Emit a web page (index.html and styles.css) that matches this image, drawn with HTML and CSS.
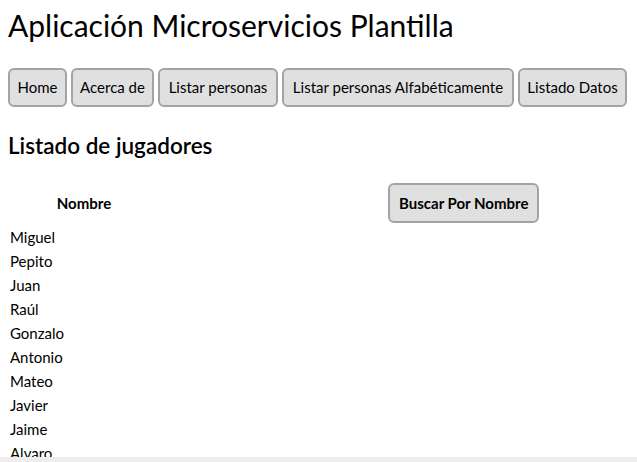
FILE: index.html
```html
<!DOCTYPE html>
<html lang="es">
<head>
<meta charset="utf-8">
<title>Aplicación Microservicios Plantilla</title>
<link rel="stylesheet" href="styles.css">
</head>
<body>
<h1 class="title">Aplicación Microservicios Plantilla</h1>
<nav class="nav">
  <a class="nav-btn" href="#">Home</a>
  <a class="nav-btn" href="#">Acerca de</a>
  <a class="nav-btn" href="#">Listar personas</a>
  <a class="nav-btn" href="#">Listar personas Alfabéticamente</a>
  <a class="nav-btn" href="#">Listado Datos</a>
</nav>
<h2 class="subtitle">Listado de jugadores</h2>
<div class="table">
  <div class="head-row">
    <div class="th">Nombre</div>
    <div class="spacer"></div>
    <div class="search"><button class="search-btn" type="button">Buscar Por Nombre</button></div>
  </div>
  <div class="td">Miguel</div>
  <div class="td">Pepito</div>
  <div class="td">Juan</div>
  <div class="td">Raúl</div>
  <div class="td">Gonzalo</div>
  <div class="td">Antonio</div>
  <div class="td">Mateo</div>
  <div class="td">Javier</div>
  <div class="td">Jaime</div>
  <div class="td">Alvaro</div>
</div>
<div class="footer-bar"></div>
</body>
</html>
```
FILE: styles.css
```css
html, body {
  margin: 0;
  padding: 0;
}
body {
  padding: 0 8px;
  font-family: Lato, "Noto Sans", sans-serif;
  color: #000;
  background: #fff;
}
.title {
  margin: 0;
  padding-top: 6px;
  font-size: 30px;
  font-weight: 400;
  line-height: 38px;
}
.nav {
  display: grid;
  grid-template-columns: 59px 83px 120px 232px 109px;
  column-gap: 4px;
  margin-top: 24px;
}
.nav-btn {
  display: block;
  padding: 8px 0;
  font-size: 15px;
  line-height: 19px;
  text-align: center;
  white-space: nowrap;
  color: #000;
  text-decoration: none;
  background: #e0e0e0;
  border: 2px solid #a3a3a3;
  border-radius: 6px;
}
.subtitle {
  margin: 0;
  margin-top: 24px;
  font-size: 22.5px;
  font-weight: 600;
  line-height: 30px;
}
.table {
  margin-top: 19px;
  font-size: 15px;
}
.head-row {
  display: grid;
  grid-template-columns: 152px 228px auto;
  align-items: center;
  height: 45px;
}
.th {
  text-align: center;
  font-weight: 700;
}
.search-btn {
  font-family: inherit;
  font-size: 15px;
  font-weight: 700;
  line-height: 22px;
  color: #000;
  padding: 7px 9px;
  background: #e0e0e0;
  border: 2px solid #a3a3a3;
  border-radius: 6px;
}
.td {
  padding: 0 2px;
  line-height: 24px;
}
.footer-bar {
  position: fixed;
  left: 0;
  right: 0;
  bottom: 0;
  height: 5px;
  background: #eeeeee;
}
```
